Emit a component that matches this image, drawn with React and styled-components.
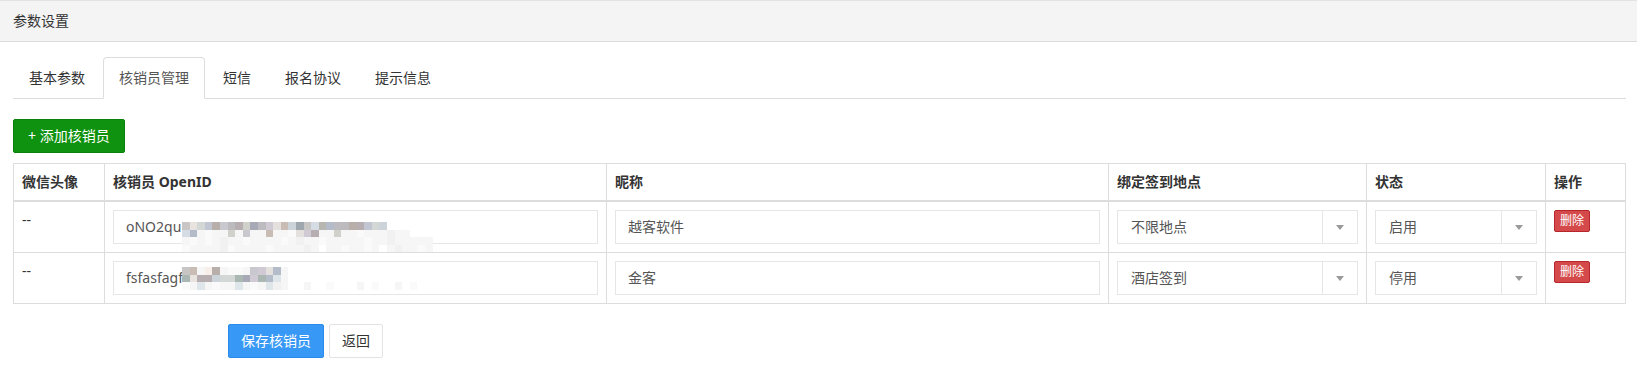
import styled, { createGlobalStyle, css } from "styled-components";

const GlobalStyle = createGlobalStyle`
  * {
    box-sizing: border-box;
  }
  body {
    margin: 0;
    background: #fff;
    color: #333;
    font-family: "Noto Sans", "Noto Sans CJK SC", sans-serif;
    font-size: 14px;
    line-height: 20px;
  }
`;

const TitleBar = styled.div`
  height: 42px;
  padding: 0 13px;
  border-top: 1px solid #e3e3e3;
  border-bottom: 1px solid #dcdcdc;
  background: #f4f4f4;
  line-height: 40px;
  color: #333;
`;

const Body = styled.div`
  padding: 15px 11px 20px 13px;
`;

const TabList = styled.ul`
  display: flex;
  margin: 0;
  padding: 0;
  list-style: none;
  border-bottom: 1px solid #ddd;
`;

const Tab = styled.li`
  margin: 0 2px -1px 0;
  padding: 10px 15px;
  border: 1px solid transparent;
  border-radius: 4px 4px 0 0;
  color: #333;
  line-height: 20px;
  ${(p) =>
    p.$active &&
    css`
      border-color: #ddd #ddd transparent;
      background: #fff;
      color: #555;
    `}
`;

const TabPane = styled.div`
  padding-top: 20px;
`;

const buttonVariants = {
  success: css`
    background: #0f920f;
    border-color: #0c800c;
    color: #fff;
  `,
  primary: css`
    background: #3898f5;
    border-color: #2c8be8;
    color: #fff;
  `,
  plain: css`
    background: #fff;
    border-color: #e3e3e3;
    color: #333;
  `,
  danger: css`
    height: 22px;
    padding: 0 5px;
    font-size: 12px;
    background: #d44949;
    border-color: #b8262b;
    color: #fff;
  `,
};

const Button = styled.button`
  height: 34px;
  padding: 6px ${(p) => p.$pad || 12}px;
  border: 1px solid;
  border-radius: 2px;
  font-family: inherit;
  font-size: 14px;
  line-height: 20px;
  cursor: pointer;
  ${(p) => buttonVariants[p.$variant]}
`;

const Table = styled.table`
  width: 100%;
  margin-top: 10px;
  border-collapse: collapse;
  table-layout: fixed;
  border: 1px solid #ddd;
`;

const Col = styled.col`
  width: ${(p) => (p.$w ? `${p.$w}px` : "auto")};
`;

const Th = styled.th`
  padding: 8px;
  border: 1px solid #ddd;
  border-bottom-width: 2px;
  text-align: left;
  font-weight: 700;
  line-height: 20px;
  color: #333;
`;

const Td = styled.td`
  padding: 8px;
  border: 1px solid #ddd;
  vertical-align: top;
  line-height: 20px;
`;

const Field = styled.div`
  position: relative;
  height: 34px;
  padding: 6px 12px;
  border: 1px solid #e5e6e7;
  color: #555;
  white-space: nowrap;
`;

const SelectBox = styled.div`
  display: flex;
  height: 34px;
  border: 1px solid #e5e6e7;
  color: #555;
`;

const SelectValue = styled.span`
  flex: 1;
  padding: 6px 13px;
`;

const SelectArrow = styled.span`
  display: flex;
  align-items: center;
  justify-content: center;
  width: 35px;
  border-left: 1px solid #e5e6e7;
  &::after {
    content: "";
    border-left: 4.5px solid transparent;
    border-right: 4.5px solid transparent;
    border-top: 5px solid #9a9a9a;
  }
`;

const Actions = styled.div`
  display: flex;
  gap: 5px;
  margin-top: 20px;
  padding-left: 215px;
`;

const Mosaic = styled.div`
  position: absolute;
  left: ${(p) => p.$left}px;
  top: ${(p) => p.$top}px;
  display: grid;
  grid-template-columns: repeat(${(p) => p.$cols}, 7.6px);
  grid-auto-rows: 7.6px;
  pointer-events: none;
`;

const Pixel = styled.span`
  background: ${(p) => p.$c};
`;

const tones = {
  a: "#cbc6c6",
  b: "#e8e3df",
  c: "#d3d7d6",
  d: "#c2c6d3",
  e: "#b9afaa",
  f: "#c9c8cf",
  g: "#bcbabd",
  h: "#b6aeb1",
  i: "#d0d1cb",
  j: "#a7a9b6",
  k: "#bdbbbf",
  l: "#cfcad3",
  m: "#e3e0dd",
  n: "#c9bcb5",
  o: "#ccd3d9",
  p: "#9ea7ad",
  q: "#c8c6c5",
  r: "#d6dce3",
  s: "#b8b6b1",
  t: "#b5bcc9",
  u: "#aab7b2",
  v: "#dfe6ea",
  w: "#f6f6f6",
  x: "#fafafa",
  y: "#f1f1f1",
  z: "#f8eeea",
};

const blurOne = [
  "abcdefghijklmnopqrstkgehdco......",
  "rtwxwwiwfwwnwwxmlhwwiwwxwwwyww...",
  "wxwxwywwxwwwwxwywwxwwwwwxwwywwwww",
  "xwwwwyxwwwwxwwwwyw.wwxwwxw.wywwxw",
];

const blurTwo = [
  "qnwzewxxwflmtw",
  "ubhhoccujlutvw",
  "xwvwxwwvwxwvyw..w..x...w.x..w.x..",
];

const Blur = ({ left, top, rows }) => (
  <Mosaic $left={left} $top={top} $cols={Math.max(...rows.map((r) => r.length))}>
    {rows.flatMap((row, y) =>
      row
        .padEnd(33, ".")
        .split("")
        .map((ch, x) => <Pixel key={`${y}-${x}`} $c={tones[ch] || "transparent"} />)
    )}
  </Mosaic>
);

const Select = ({ value }) => (
  <SelectBox>
    <SelectValue>{value}</SelectValue>
    <SelectArrow />
  </SelectBox>
);

const tabs = ["基本参数", "核销员管理", "短信", "报名协议", "提示信息"];

const rows = [
  { id: 1, openid: "oNO2qu", blur: blurOne, blurTop: 11, name: "越客软件", place: "不限地点", status: "启用" },
  { id: 2, openid: "fsfasfagf", blur: blurTwo, blurTop: 5, name: "金客", place: "酒店签到", status: "停用" },
];

const App = () => (
  <>
    <GlobalStyle />
    <TitleBar>参数设置</TitleBar>
    <Body>
      <TabList>
        {tabs.map((t) => (
          <Tab key={t} $active={t === "核销员管理"}>
            {t}
          </Tab>
        ))}
      </TabList>
      <TabPane>
        <Button $variant="success" $pad={14}>
          + 添加核销员
        </Button>
        <Table>
          <colgroup>
            <Col $w={91} />
            <Col $w={502} />
            <Col $w={502} />
            <Col $w={258} />
            <Col $w={179} />
            <Col />
          </colgroup>
          <thead>
            <tr>
              <Th>微信头像</Th>
              <Th>核销员 OpenID</Th>
              <Th>昵称</Th>
              <Th>绑定签到地点</Th>
              <Th>状态</Th>
              <Th>操作</Th>
            </tr>
          </thead>
          <tbody>
            {rows.map((r) => (
              <tr key={r.id}>
                <Td>--</Td>
                <Td>
                  <Field>
                    {r.openid}
                    <Blur left={68} top={r.blurTop} rows={r.blur} />
                  </Field>
                </Td>
                <Td>
                  <Field>{r.name}</Field>
                </Td>
                <Td>
                  <Select value={r.place} />
                </Td>
                <Td>
                  <Select value={r.status} />
                </Td>
                <Td>
                  <Button $variant="danger">删除</Button>
                </Td>
              </tr>
            ))}
          </tbody>
        </Table>
        <Actions>
          <Button $variant="primary">保存核销员</Button>
          <Button $variant="plain">返回</Button>
        </Actions>
      </TabPane>
    </Body>
  </>
);

export default App;
